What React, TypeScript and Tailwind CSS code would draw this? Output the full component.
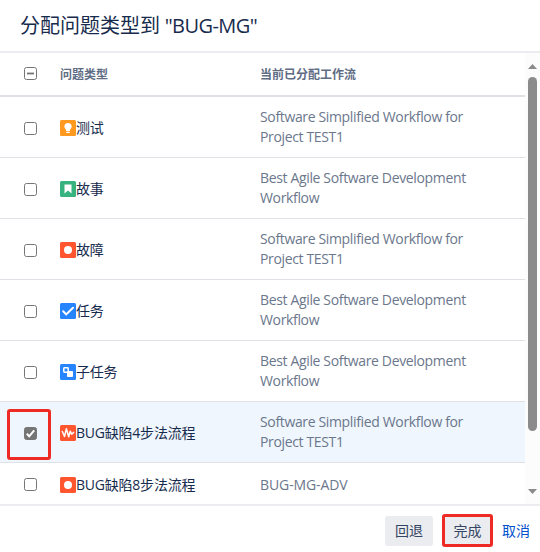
import React from 'react';

type Kind = 'test' | 'story' | 'bug' | 'task' | 'subtask' | 'pulse';

interface Row {
  kind: Kind;
  name: string;
  workflow: string[];
  checked?: boolean;
}

const SIMPLE = ['Software Simplified Workflow for', 'Project TEST1'];
const AGILE = ['Best Agile Software Development', 'Workflow'];

const rows: Row[] = [
  { kind: 'test', name: '测试', workflow: SIMPLE },
  { kind: 'story', name: '故事', workflow: AGILE },
  { kind: 'bug', name: '故障', workflow: SIMPLE },
  { kind: 'task', name: '任务', workflow: AGILE },
  { kind: 'subtask', name: '子任务', workflow: AGILE },
  { kind: 'pulse', name: 'BUG缺陷4步法流程', workflow: SIMPLE, checked: true },
  { kind: 'bug', name: 'BUG缺陷8步法流程', workflow: ['BUG-MG-ADV'] },
];

const colors: Record<Kind, string> = {
  test: '#ff991f',
  story: '#36b37e',
  bug: '#ff5630',
  task: '#2684ff',
  subtask: '#2684ff',
  pulse: '#ff5630',
};

function TypeIcon({ kind }: { kind: Kind }) {
  return (
    <svg className="size-4 shrink-0" viewBox="0 0 16 16">
      <rect width="16" height="16" rx="1.5" fill={colors[kind]} />
      {kind === 'test' && (
        <path
          d="M8 3a3.6 3.6 0 0 0-3.6 3.6c0 1.4.8 2.2 1.6 3V11h4V9.6c.8-.8 1.6-1.6 1.6-3A3.6 3.6 0 0 0 8 3zM6.2 11.8h3.6V13H6.2z"
          fill="#fff"
        />
      )}
      {kind === 'story' && <path d="M4.500 3.500h7v9L8 9.500l-3.500 3z" fill="#fff" />}
      {kind === 'bug' && <circle cx="8" cy="8" r="4" fill="#fff" />}
      {kind === 'task' && (
        <path d="M3.200 8.300l3 3.100L13 4.700" fill="none" stroke="#fff" strokeWidth="2" strokeLinecap="round" />
      )}
      {kind === 'subtask' && (
        <>
          <rect x="3.800" y="3.800" width="4.400" height="4.400" rx=".6" fill="none" stroke="#fff" strokeWidth="1.500" />
          <rect x="7" y="7" width="6" height="6" rx=".8" fill="#fff" />
        </>
      )}
      {kind === 'pulse' && (
        <path
          d="M2.300 6.500l2.200 5L6.400 3.800l2.300 8 1.500-5.600 1.500 3 2-1.800"
          fill="none"
          stroke="#fff"
          strokeWidth="1.500"
          strokeLinecap="round"
          strokeLinejoin="round"
        />
      )}
    </svg>
  );
}

function Checkbox({ state }: { state: 'off' | 'on' | 'mixed' }) {
  return (
    <svg className="block size-[13px]" viewBox="0 0 13 13">
      <rect
        x=".5"
        y=".5"
        width="12"
        height="12"
        rx="2"
        fill={state === 'on' ? '#757575' : '#fff'}
        stroke="#767676"
      />
      {state === 'mixed' && <path d="M3 6.500h7" stroke="#757575" strokeWidth="1.800" />}
      {state === 'on' && <path d="M2.800 6.800l2.400 2.500 5-6" fill="none" stroke="#fff" strokeWidth="2" />}
    </svg>
  );
}

export default function App() {
  return (
    <div className="flex h-[552px] w-[540px] flex-col overflow-hidden bg-white font-['Open_Sans','Noto_Sans_CJK_SC',sans-serif] text-sm text-[#172b4d]">
      <header className="flex h-[53px] shrink-0 items-center border-b-2 border-[#ebecf0] pl-5 text-[20px] leading-6">
        <h1 className="whitespace-pre">
          分配问题类型到<span className="tracking-[-0.55px]"> "BUG-MG"</span>
        </h1>
      </header>
      <div className="flex h-[451px] shrink-0">
        <div className="w-[525px] overflow-hidden">
          <div className="flex h-11 items-center border-b-2 border-[#dfe1e6] text-xs font-bold text-[#5e6c84]">
            <div className="w-[60px] pb-px pl-6">
              <Checkbox state="mixed" />
            </div>
            <div className="w-[200px] pt-px">问题类型</div>
            <div className="pt-px">当前已分配工作流</div>
          </div>
          {rows.map((row) => (
            <div
              key={row.name}
              className={`flex shrink-0 items-center border-b border-[#dfe1e6] pt-0.5 ${row.workflow.length > 1 ? 'h-[61px]' : 'h-[43px]'} ${row.checked ? 'bg-[#eff6fd]' : ''}`}
            >
              <div className={`relative w-[60px] pl-6 ${row.workflow.length > 1 ? 'pt-px' : 'pb-px'}`}>
                <Checkbox state={row.checked ? 'on' : 'off'} />
                {row.checked && (
                  <span className="absolute -top-[17px] left-[7px] h-[51px] w-11 rounded-[3px] border-3 border-[#ed2b24]" />
                )}
              </div>
              <div className="flex w-[200px] items-center whitespace-nowrap leading-5 tracking-[-0.22px]">
                <TypeIcon kind={row.kind} />
                {row.name}
              </div>
              <div
                className={`whitespace-nowrap leading-5 text-[#6b778c] ${row.workflow.length > 1 ? 'pb-0.5 tracking-[-0.35px]' : 'tracking-[-0.1px]'}`}
              >
                {row.workflow.map((line) => (
                  <div key={line}>{line}</div>
                ))}
              </div>
            </div>
          ))}
        </div>
        <div className="flex w-[15px] flex-col items-center bg-[#fcfcfc] pt-[11px] pb-[10px]">
          <svg className="h-[5px] w-[9px] shrink-0" viewBox="0 0 9 5">
            <path d="M0 5L4.500 0 9 5z" fill="#8b8b8b" />
          </svg>
          <div className="mt-2 h-[354px] w-[9px] rounded-full bg-[#8b8b8b]" />
          <svg className="mt-auto h-[5px] w-[9px] shrink-0" viewBox="0 0 9 5">
            <path d="M0 0h9L4.500 5z" fill="#8b8b8b" />
          </svg>
        </div>
      </div>
      <footer className="flex grow items-start border-t-2 border-[#ebecf0] pt-[10px] pl-[385px]">
        <button className="h-[30px] w-12 rounded-[3px] bg-[#ebecf0] text-[#344563]">回退</button>
        <button className="-mt-[2px] ml-[9px] h-[33px] w-[51px] rounded-[3px] border-3 border-[#ed2b24] bg-[#ebecf0] text-[#344563]">
          完成
        </button>
        <a className="ml-[9px] leading-[30px] text-[#0052cc]">取消</a>
      </footer>
    </div>
  );
}
